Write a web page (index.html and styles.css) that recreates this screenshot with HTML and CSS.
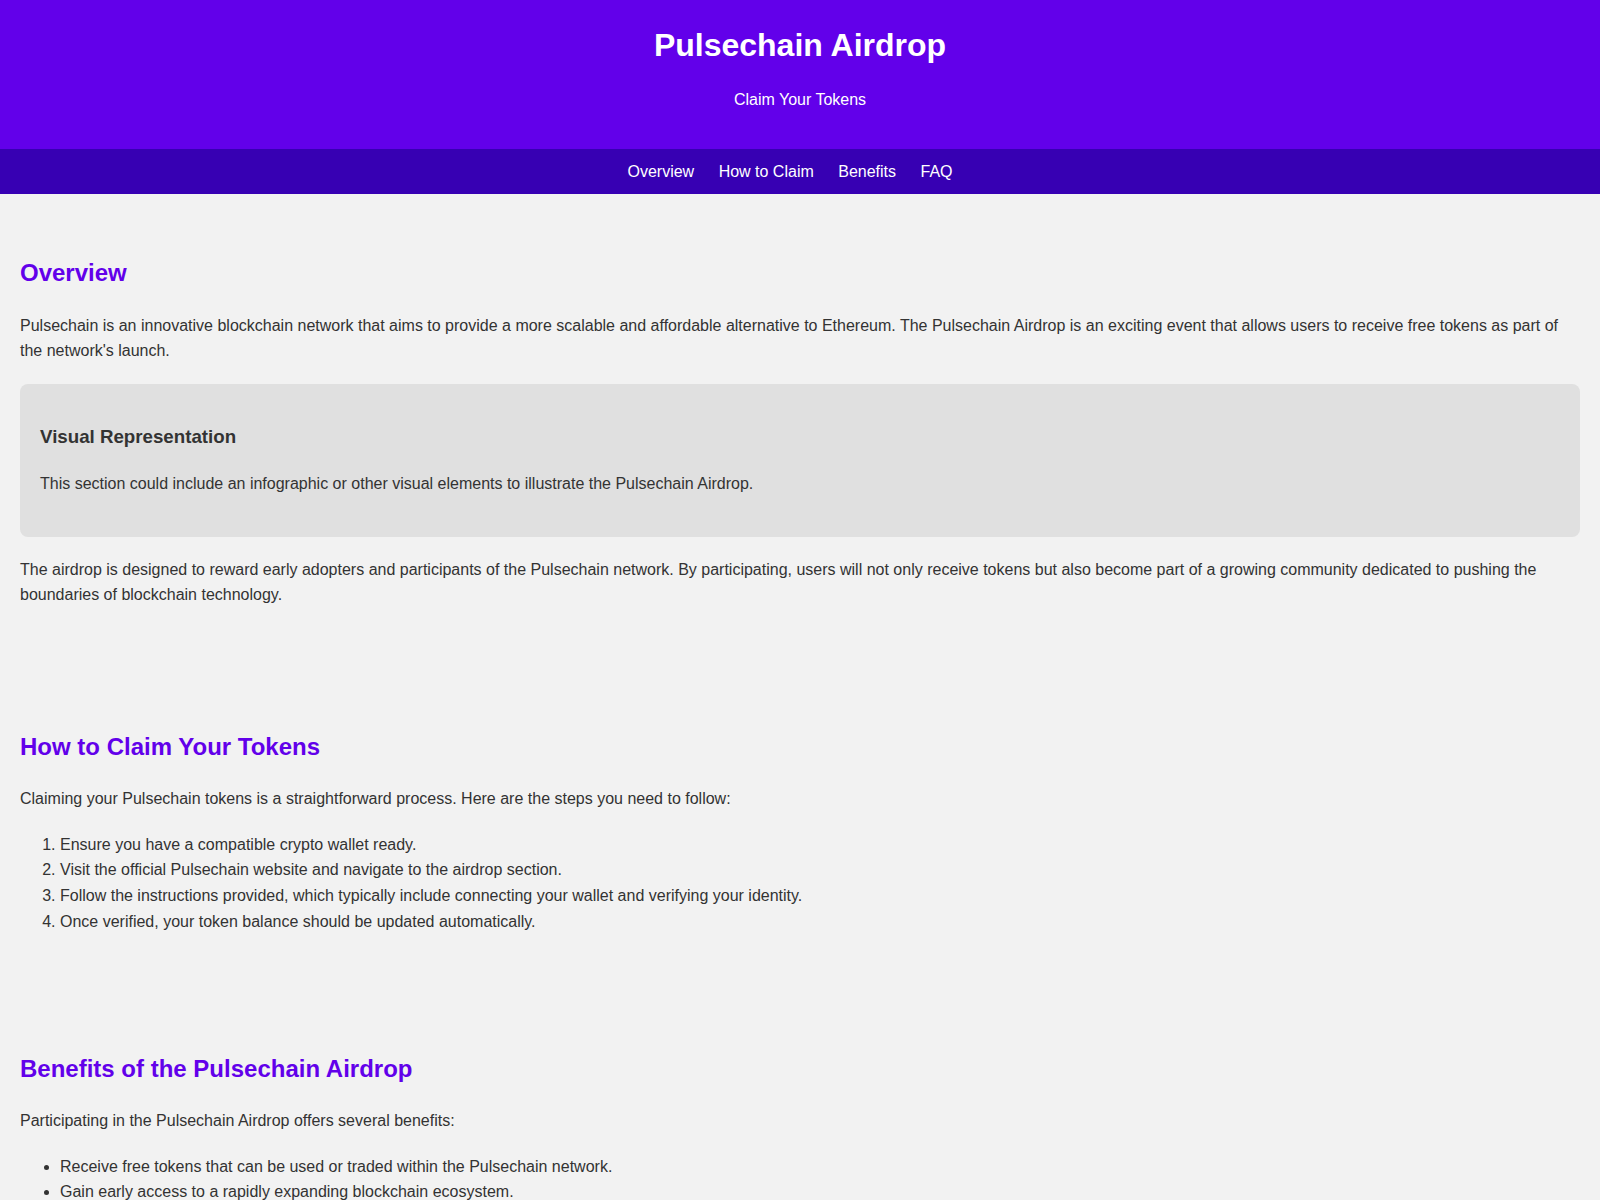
FILE: index.html
```html
<!DOCTYPE html>
<html lang="en">

<head>
  <meta charset="UTF-8">
  <meta name="viewport" content="width=device-width, initial-scale=1.0">
  <title>Pulsechain Airdrop</title>
  <link rel="stylesheet" href="styles.css">
</head>

<body>
  <header>
    <h1>Pulsechain Airdrop</h1>
    <p>Claim Your Tokens</p>
  </header>

  <nav>
    <a href="#overview">Overview</a>
    <a href="#how-to-claim">How to Claim</a>
    <a href="#benefits">Benefits</a>
    <a href="#faq">FAQ</a>
  </nav>

  <section id="overview">
    <h2>Overview</h2>
    <p>Pulsechain is an innovative blockchain network that aims to provide a more scalable and affordable alternative to Ethereum. The Pulsechain Airdrop is an exciting event that allows users to receive free tokens as part of the network's launch.</p>
    <div class="visual">
      <h3>Visual Representation</h3>
      <p>This section could include an infographic or other visual elements to illustrate the Pulsechain Airdrop.</p>
    </div>
    <p>The airdrop is designed to reward early adopters and participants of the Pulsechain network. By participating, users will not only receive tokens but also become part of a growing community dedicated to pushing the boundaries of blockchain technology.</p>
  </section>

  <section id="how-to-claim">
    <h2>How to Claim Your Tokens</h2>
    <p>Claiming your Pulsechain tokens is a straightforward process. Here are the steps you need to follow:</p>
    <ol>
      <li>Ensure you have a compatible crypto wallet ready.</li>
      <li>Visit the official Pulsechain website and navigate to the airdrop section.</li>
      <li>Follow the instructions provided, which typically include connecting your wallet and verifying your identity.</li>
      <li>Once verified, your token balance should be updated automatically.</li>
    </ol>
  </section>

  <section id="benefits">
    <h2>Benefits of the Pulsechain Airdrop</h2>
    <p>Participating in the Pulsechain Airdrop offers several benefits:</p>
    <ul>
      <li>Receive free tokens that can be used or traded within the Pulsechain network.</li>
      <li>Gain early access to a rapidly expanding blockchain ecosystem.</li>
      <li>Become part of a community focused on innovation and decentralization.</li>
      <li>Potential for token value appreciation as the network grows.</li>
    </ul>
  </section>

  <section id="faq">
    <h2>Frequently Asked Questions</h2>
    <p>Find answers to common questions about the Pulsechain Airdrop below.</p>
  </section>
</body>

</html>
```

FILE: styles.css
```css
body {
  margin: 0;
  font-family: Arial, "Liberation Sans", sans-serif;
  line-height: 1.6;
  color: #333;
  background-color: #f2f2f2;
}

header {
  background-color: #6200ea;
  color: white;
  text-align: center;
  padding: 20px;
}

header h1 {
  margin: 0;
}

nav {
  background-color: #3700b3;
  text-align: center;
  padding: 10px;
}

nav a {
  color: white;
  text-decoration: none;
  margin-right: 20px;
}

section {
  padding: 40px 20px;
}

section p {
  margin: 16px 0 20px;
}

h2 {
  color: #6200ea;
}

.visual {
  background-color: #e0e0e0;
  padding: 20px;
  margin: 20px 0;
  border-radius: 8px;
}
```
